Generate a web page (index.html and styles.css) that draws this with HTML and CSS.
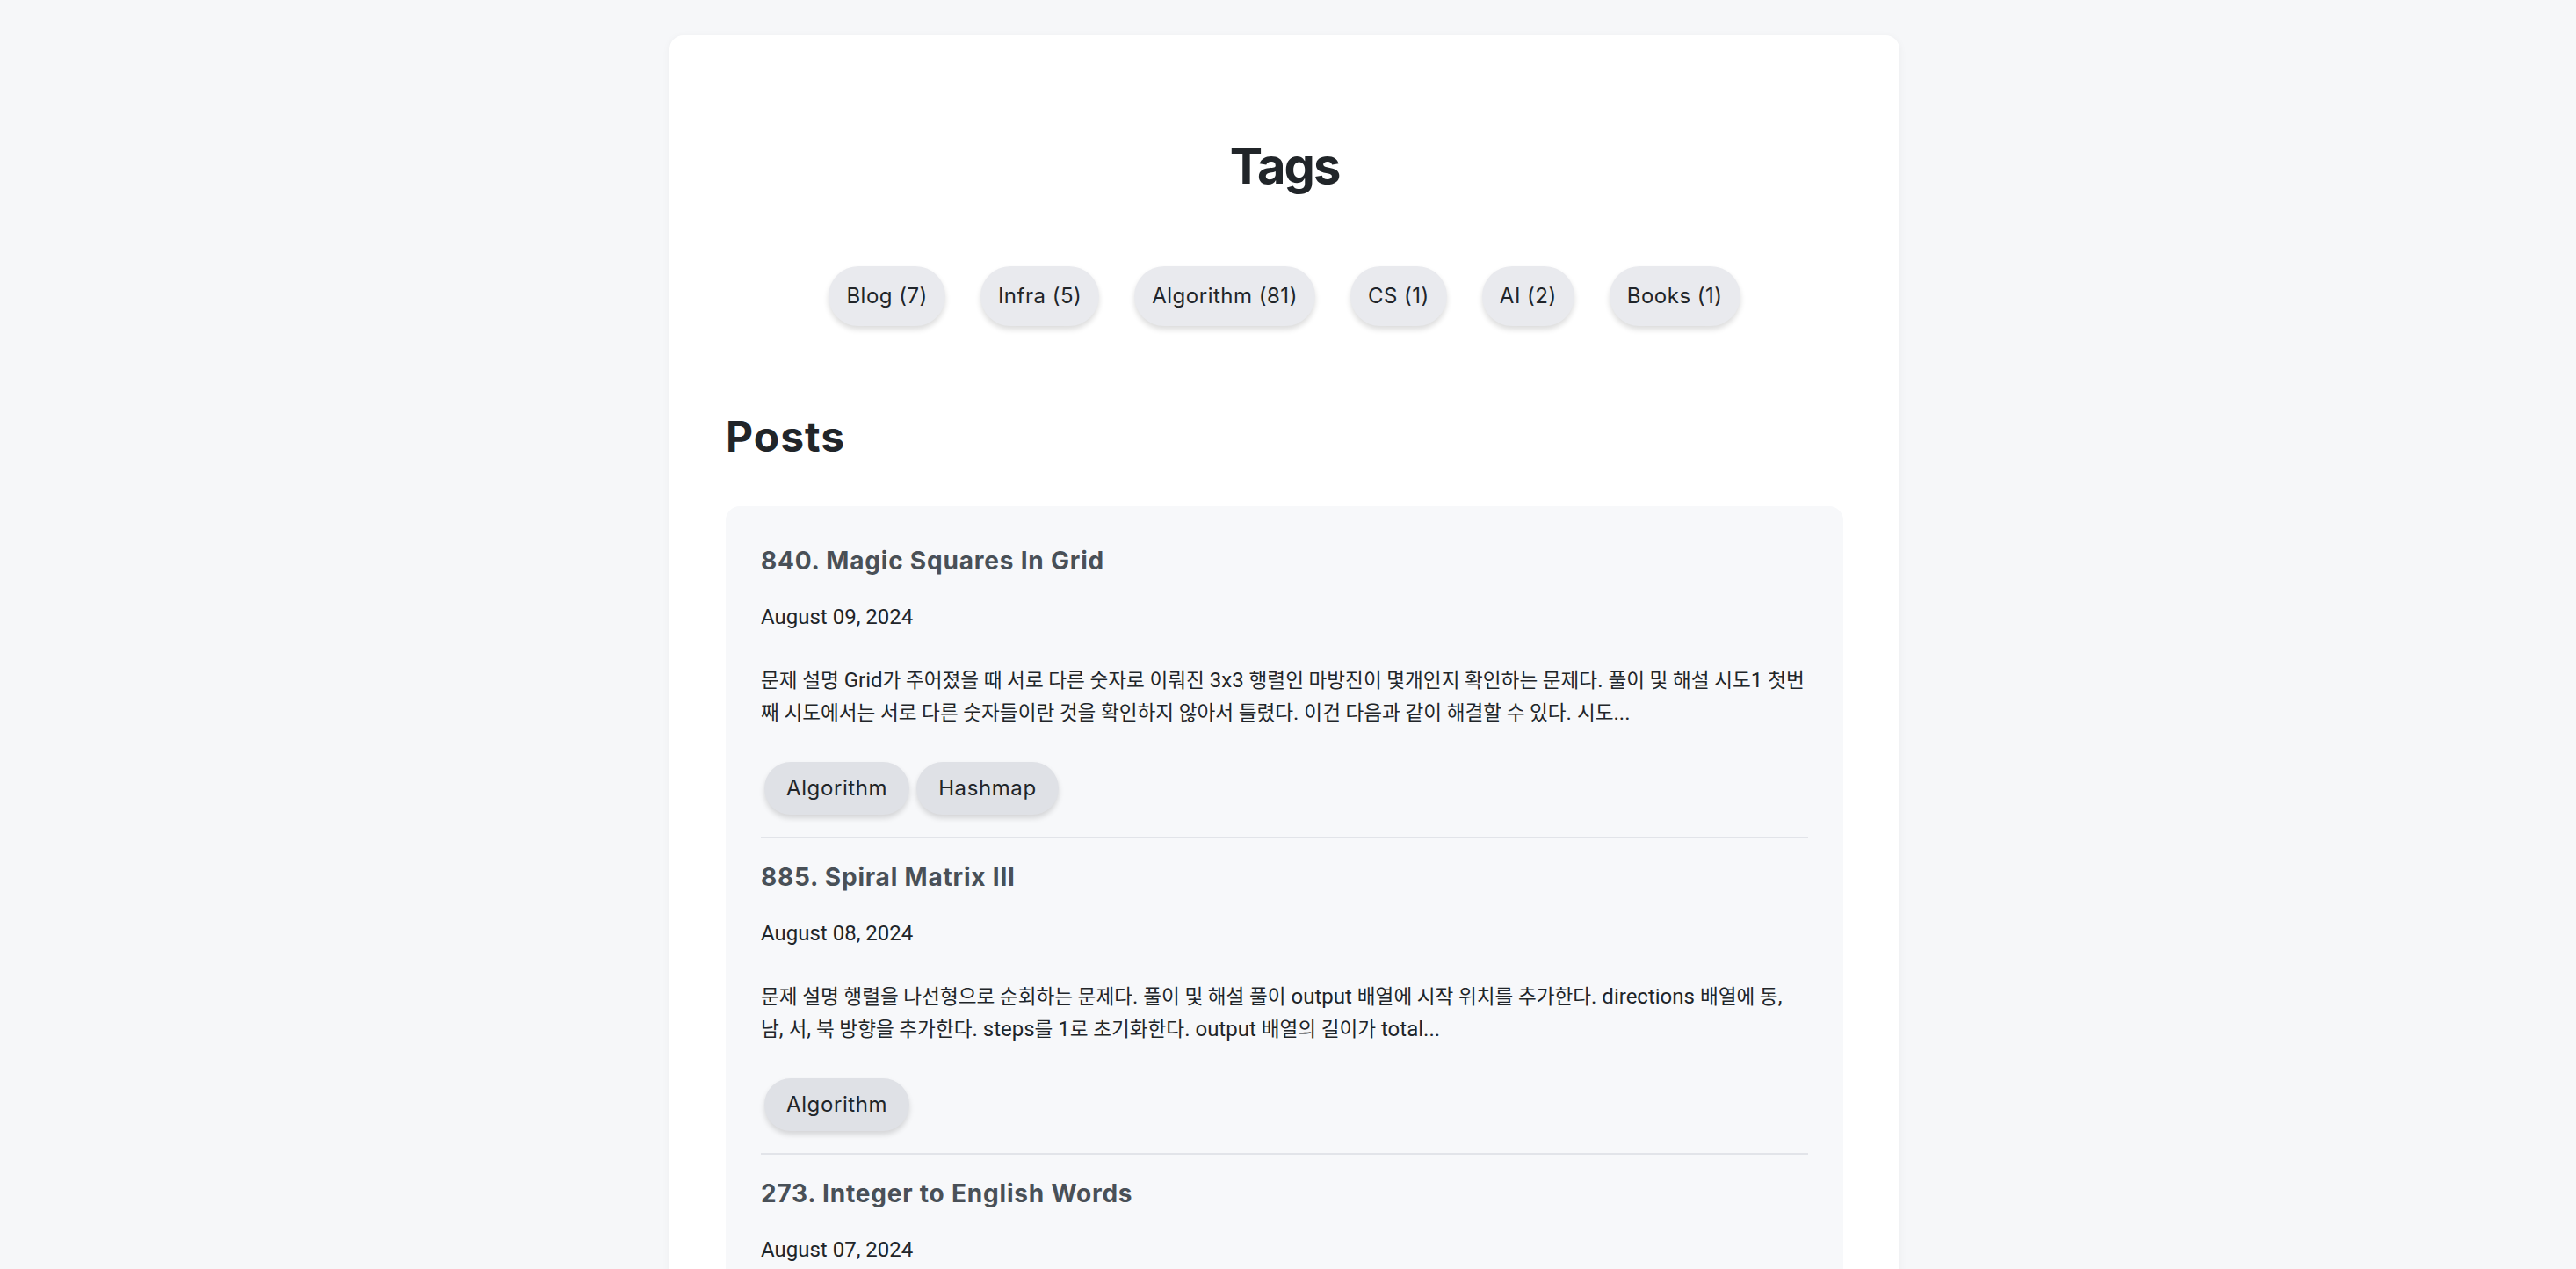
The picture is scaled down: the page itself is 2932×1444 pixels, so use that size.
FILE: index.html
```html
<!DOCTYPE html>
<html lang="ko">
<head>
<meta charset="utf-8">
<title>Tags</title>
<link rel="stylesheet" href="styles.css">
</head>
<body>
<main class="page">
  <section class="tags-section">
    <h2 class="section-title center">Tags</h2>
    <div class="tag-list">
      <a class="tag-chip">Blog (7)</a>
      <a class="tag-chip">Infra (5)</a>
      <a class="tag-chip">Algorithm (81)</a>
      <a class="tag-chip">CS (1)</a>
      <a class="tag-chip">AI (2)</a>
      <a class="tag-chip">Books (1)</a>
    </div>
  </section>
  <section class="posts-section">
    <h2 class="section-title posts-title">Posts</h2>
    <div class="post-list">
      <article class="post">
        <h3 class="post-title">840. Magic Squares In Grid</h3>
        <p class="post-date">August 09, 2024</p>
        <p class="post-excerpt"><span class="ko">문제 설명</span> Grid<span class="ko">가 주어졌을 때 서로 다른 숫자로 이뤄진</span> 3x3 <span class="ko">행렬인 마방진이 몇개인지 확인하는 문제다</span>. <span class="ko">풀이 및 해설 시도</span>1 <span class="ko">첫번째 시도에서는 서로 다른 숫자들이란 것을 확인하지 않아서 틀렸다</span>. <span class="ko">이건 다음과 같이 해결할 수 있다</span>. <span class="ko">시도</span>...</p>
        <div class="post-tags">
          <a class="post-tag">Algorithm</a>
          <a class="post-tag">Hashmap</a>
        </div>
      </article>
      <article class="post">
        <h3 class="post-title">885. Spiral Matrix III</h3>
        <p class="post-date">August 08, 2024</p>
        <p class="post-excerpt"><span class="ko">문제 설명 행렬을 나선형으로 순회하는 문제다</span>. <span class="ko">풀이 및 해설 풀이</span> output <span class="ko">배열에 시작 위치를 추가한다</span>. directions <span class="ko">배열에 동</span>, <span class="ko">남</span>, <span class="ko">서</span>, <span class="ko">북 방향을 추가한다</span>. steps<span class="ko">를</span> 1<span class="ko">로 초기화한다</span>. output <span class="ko">배열의 길이가</span> total...</p>
        <div class="post-tags">
          <a class="post-tag">Algorithm</a>
        </div>
      </article>
      <article class="post">
        <h3 class="post-title">273. Integer to English Words</h3>
        <p class="post-date">August 07, 2024</p>
        <p class="post-excerpt"><span class="ko">문제 설명 음이 아닌 정수</span> num<span class="ko">이 주어졌을 때 이를 영어 단어 표현으로 변환하는 문제다</span>. <span class="ko">풀이 및 해설 세 자리씩 끊어서</span> Thousand, Million, Billion <span class="ko">단위를 붙인다</span>...</p>
        <div class="post-tags">
          <a class="post-tag">Algorithm</a>
        </div>
      </article>
    </div>
  </section>
</main>
</body>
</html>
```

FILE: styles.css
```css
html, body {
  margin: 0;
  padding: 0;
}

body {
  background: #f6f7f9;
  color: #212529;
  font-family: Roboto, "Noto Sans CJK KR", sans-serif;
  font-size: 24px;
  padding-right: 8px;
}

.page {
  width: 1400px;
  box-sizing: border-box;
  margin: 40px auto;
  padding: 64px 64px 64px;
  background: #ffffff;
  border-radius: 16px;
  box-shadow: 0 2px 10px rgba(0, 0, 0, 0.05);
}

.section-title {
  font-family: Inter, "Noto Sans CJK KR", sans-serif;
  font-weight: 700;
  color: #212529;
  margin: 0;
  line-height: 1.2;
}

.center {
  text-align: center;
  font-size: 56px;
  letter-spacing: -2px;
  margin-top: 52px;
}

.tag-list {
  display: flex;
  justify-content: center;
  flex-wrap: wrap;
  gap: 40px;
  margin-top: 80px;
}

.tag-chip {
  display: block;
  font-family: Inter, sans-serif;
  font-size: 24px;
  letter-spacing: 0.5px;
  line-height: 68px;
  padding: 0 20px;
  background: #e9eaee;
  color: #212529;
  border-radius: 34px;
  box-shadow: 0 4px 6px rgba(0, 0, 0, 0.14);
}

.posts-title {
  font-size: 48px;
  letter-spacing: 1px;
  margin-top: 97px;
}

.post-list {
  margin-top: 50px;
  background: #f7f8fa;
  border-radius: 16px;
  padding: 18px 40px 0;
}

.post {
  padding: 27px 0 21px;
  border-bottom: 2px solid #e2e4e9;
}

.post-title {
  font-family: Inter, "Noto Sans CJK KR", sans-serif;
  font-weight: 700;
  font-size: 28px;
  letter-spacing: 0.8px;
  line-height: 34px;
  color: #495057;
  margin: 0;
}

.post-date {
  margin: 29px 0 0;
  line-height: 36px;
}

.post-excerpt {
  margin: 36px 0 0;
  line-height: 37px;
}

.ko {
  font-size: 22.6px;
}

.post-tags {
  display: flex;
  flex-wrap: wrap;
  margin-top: 33px;
}

.post-tag {
  display: block;
  margin: 4px;
  font-family: Inter, sans-serif;
  font-size: 24px;
  letter-spacing: 0.6px;
  line-height: 60px;
  padding: 0 25px;
  background: #dfe1e6;
  color: #212529;
  border-radius: 30px;
  box-shadow: 0 4px 6px rgba(0, 0, 0, 0.14);
}
```
